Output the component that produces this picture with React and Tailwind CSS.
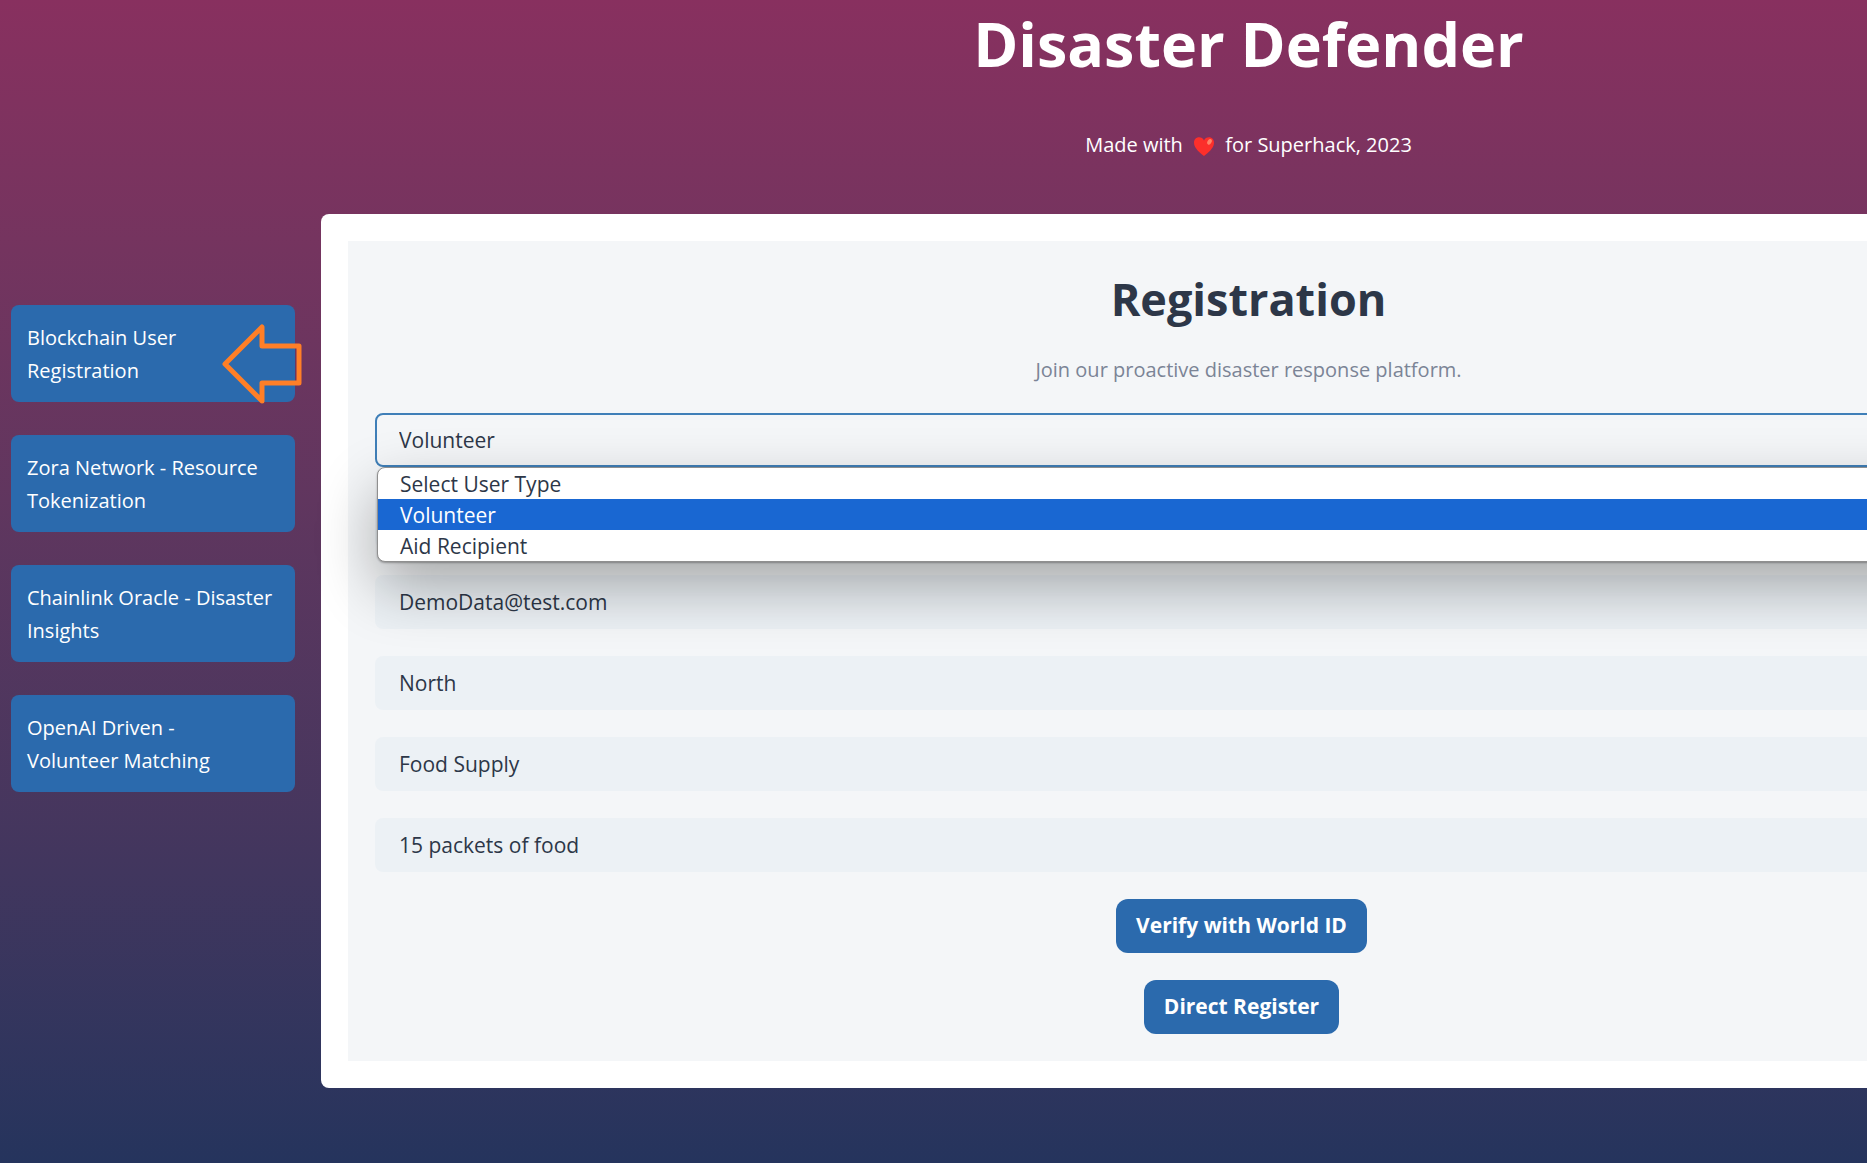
import React, { useState } from "react";

const NAV_ITEMS = [
  { id: "registration", label: "Blockchain User Registration", current: true },
  { id: "zora", label: "Zora Network - Resource Tokenization" },
  { id: "chainlink", label: "Chainlink Oracle - Disaster Insights" },
  { id: "openai", label: "OpenAI Driven - Volunteer\u00a0Matching" },
];

const USER_TYPES = ["Select User Type", "Volunteer", "Aid Recipient"];

const FIELDS = [
  { id: "name", label: "Name", value: "" },
  { id: "email", label: "Email", value: "DemoData@test.com" },
  { id: "location", label: "Location", value: "North" },
  { id: "resource", label: "Resource type", value: "Food Supply" },
  { id: "details", label: "Resource details", value: "15 packets of food" },
];

function HeartIcon() {
  return (
    <svg viewBox="0 0 24 24" className="mx-1 mb-[2px] inline-block h-6 w-6" aria-hidden="true">
      <path
        d="M12 22C9 19.500 2 14.500 2 8.700C2 5.500 4.200 3.300 7 3.300C9.300 3.300 11 4.500 12 6.500C13 4.500 14.700 3.300 17 3.300C19.800 3.300 22 5.500 22 8.700C22 14.500 15 19.500 12 22Z"
        fill="#fc2f2b"
      />
      <ellipse cx="17.500" cy="7.800" rx="2" ry="3" fill="#ff8468" transform="rotate(30 17.500 7.800)" />
    </svg>
  );
}

function PointerArrow() {
  return (
    <svg
      viewBox="0 0 80 82"
      className="pointer-events-none absolute top-[18px] left-[211px] h-[82px] w-20"
      fill="none"
      stroke="#ff7f27"
      strokeWidth="5"
      strokeLinejoin="round"
      aria-hidden="true"
    >
      <path d="M3 41L40 4V23H77V60H40V78Z" />
    </svg>
  );
}

function Sidebar() {
  return (
    <nav className="flex w-[321px] shrink-0 flex-col gap-[33px] pt-[305px] pr-[26px] pl-[11px]">
      {NAV_ITEMS.map((item) => (
        <div key={item.id} className="relative">
          <button
            type="button"
            className="block w-full rounded-lg bg-[#2b6aad] px-4 pt-4 pb-[15px] text-left text-[20px] leading-[33px] text-white"
          >
            {item.label}
          </button>
          {item.current && <PointerArrow />}
        </div>
      ))}
    </nav>
  );
}

function UserTypeSelect({ value, onChange }) {
  return (
    <div className="relative">
      <select
        aria-label="User type"
        value={value}
        onChange={(e) => onChange(e.target.value)}
        className="block h-[54px] w-full appearance-none rounded-lg border-2 border-[#3f7fb8] bg-[#f4f6f8] px-[22px] pt-[2px] text-[21px] text-[#2d3748] outline-none"
      >
        {USER_TYPES.map((t) => (
          <option key={t}>{t}</option>
        ))}
      </select>
      <ul
        role="listbox"
        aria-label="User types"
        className="absolute inset-x-0.5 top-full z-10 overflow-hidden rounded-lg border border-[#8f8f8f] bg-white shadow-[0_1px_2px_rgba(0,0,0,0.3),0_24px_60px_rgba(0,0,0,0.32)]"
      >
        {USER_TYPES.map((t) => (
          <li
            key={t}
            role="option"
            aria-selected={t === value}
            onClick={() => onChange(t)}
            className={`h-[31px] px-[22px] text-[21px] leading-[33px] ${t === value ? "bg-[#1967d2] text-white" : "text-[#2d3748]"}`}
          >
            {t}
          </li>
        ))}
      </ul>
    </div>
  );
}

function RegistrationForm() {
  const [userType, setUserType] = useState("Volunteer");

  return (
    <form
      onSubmit={(e) => e.preventDefault()}
      className="flex flex-col gap-[27px] bg-[#f4f6f8] p-[27px] text-[#2d3748]"
    >
      <div className="text-center">
        <h2 className="text-[45px] leading-[62px] font-bold">Registration</h2>
        <p className="mt-6 text-[20px] leading-8 text-[#7b8496]">
          Join our proactive disaster response platform.
        </p>
      </div>

      <UserTypeSelect value={userType} onChange={setUserType} />

      {FIELDS.map((f) => (
        <input
          key={f.id}
          id={f.id}
          type="text"
          aria-label={f.label}
          defaultValue={f.value}
          className="h-[54px] w-full rounded-lg bg-[#ecf1f5] px-6 text-[21px] text-[#2d3748] outline-none"
        />
      ))}

      <div className="mr-[14px] flex flex-col items-center gap-[27px]">
        <button type="button" className="h-[54px] rounded-xl bg-[#2b6aad] px-5 text-[21px] font-bold text-white">
          Verify with World ID
        </button>
        <button type="submit" className="h-[54px] rounded-xl bg-[#2b6aad] px-5 text-[21px] font-bold text-white">
          Direct Register
        </button>
      </div>
    </form>
  );
}

export default function App() {
  return (
    <div className="flex min-h-screen items-start overflow-hidden bg-linear-to-b from-[#88305f] to-[#25345d] font-['Open_Sans','Noto_Sans',sans-serif]">
      <Sidebar />
      {/* the main column is as wide as the window, so it runs off the right edge */}
      <main className="w-full shrink-0 pr-3">
        <header className="text-center text-white">
          <h1 className="text-[61px] leading-[88px] font-bold">Disaster Defender</h1>
          <p className="mt-[41px] text-[20px] leading-8">
            Made with <HeartIcon /> for Superhack, 2023
          </p>
        </header>
        <section className="mt-[53px] rounded-lg bg-white p-[27px]">
          <RegistrationForm />
        </section>
      </main>
    </div>
  );
}
